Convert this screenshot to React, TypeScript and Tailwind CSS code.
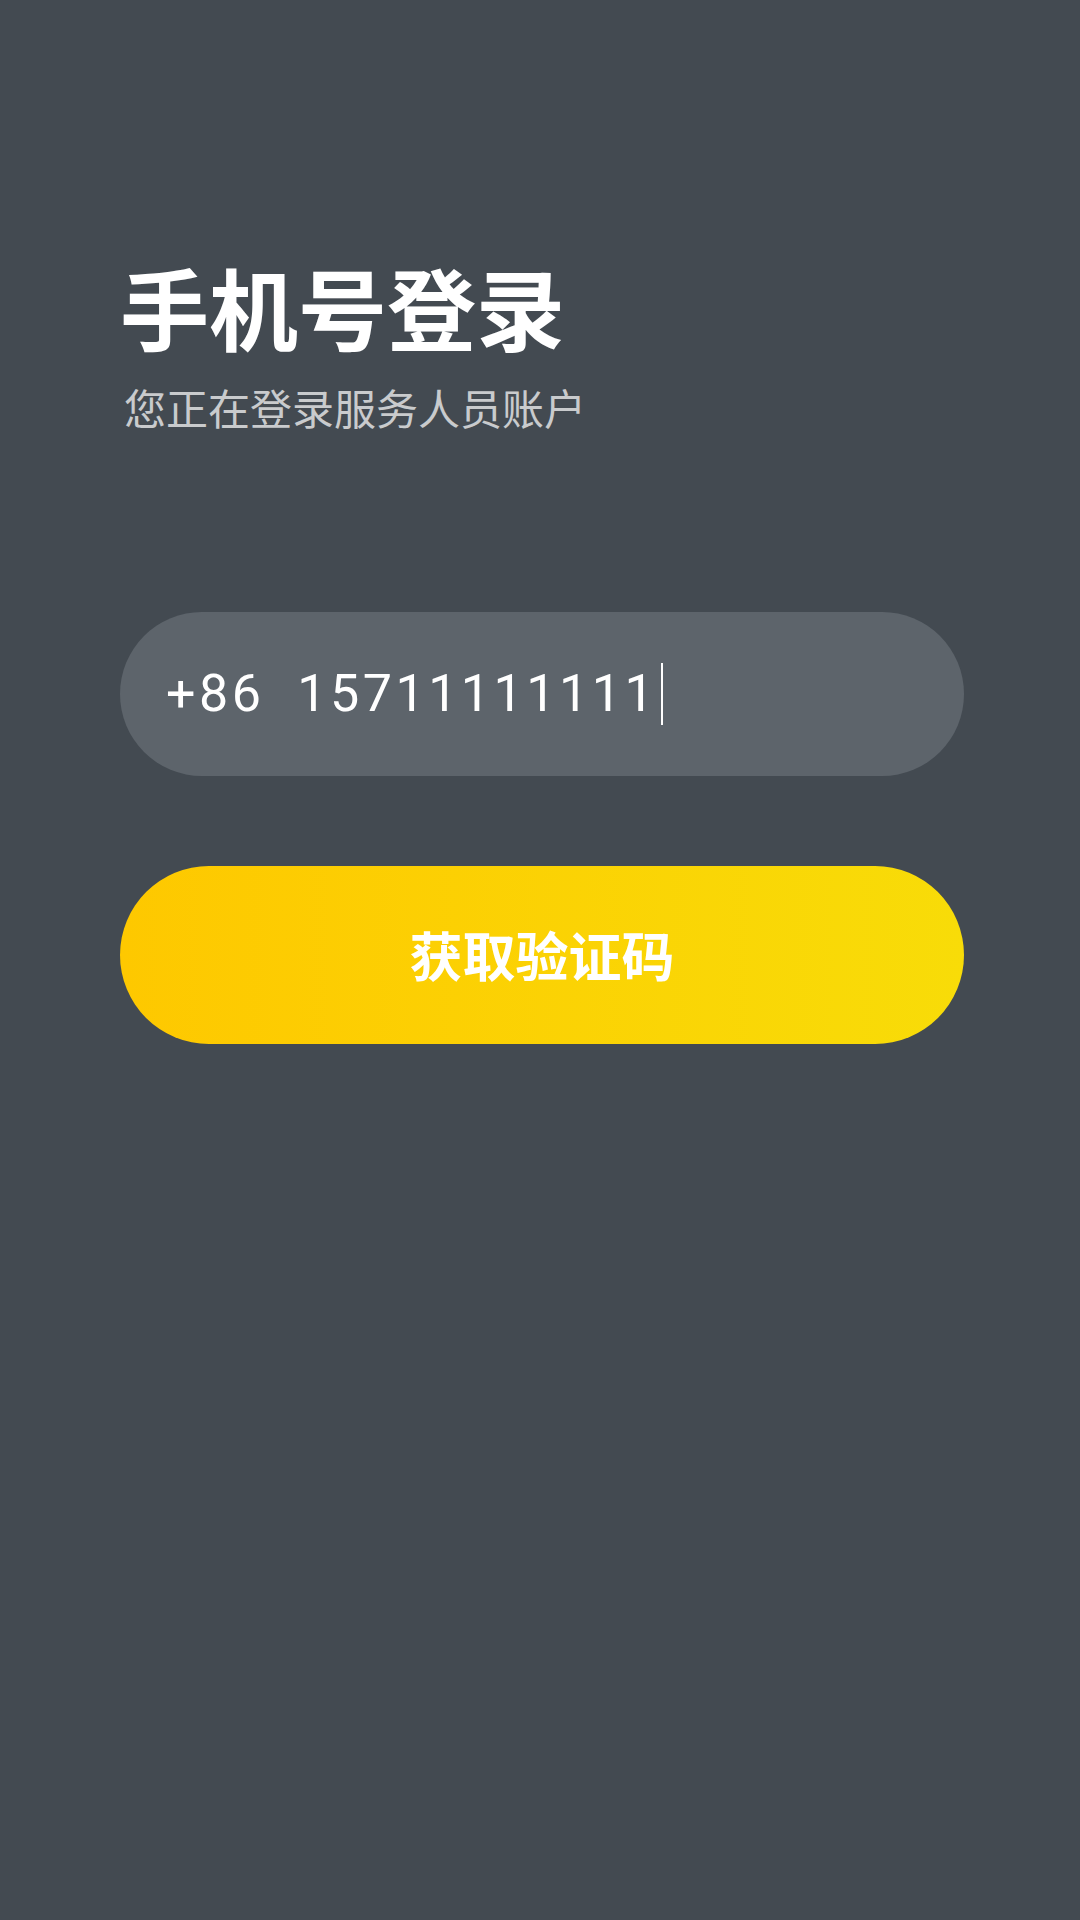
export default function App() {
  return (
    <div
      className="min-h-screen h-[1920px] w-full bg-[#434a51] pl-[120px] pr-[116px]"
      style={{ fontFamily: '"Noto Sans CJK SC", "Noto Sans", sans-serif' }}
    >
      <div className="pt-[255px]">
        <h1 className="text-[89px] font-bold leading-[1.15] text-white">手机号登录</h1>
        <p className="mt-[25px] pl-[4px] text-[42px] leading-[1.2] text-[#c9cbcd]">您正在登录服务人员账户</p>
      </div>

      <div className="mt-[179px] flex h-[164px] items-center rounded-full bg-[#5d646b] pl-[46px]">
        <span
          className="text-[52px] leading-none tracking-[3.5px] text-white whitespace-pre"
          style={{ fontFamily: 'Roboto, "Noto Sans", sans-serif' }}
        >
          +86  15711111111
        </span>
        <span className="ml-[4px] h-[62px] w-[2px] bg-white" />
      </div>

      <button className="mt-[90px] flex h-[178px] w-full items-center justify-center rounded-full bg-gradient-to-r from-[#fec800] to-[#f8dc08]">
        <span className="text-[53px] font-bold leading-none text-white">获取验证码</span>
      </button>
    </div>
  )
}
